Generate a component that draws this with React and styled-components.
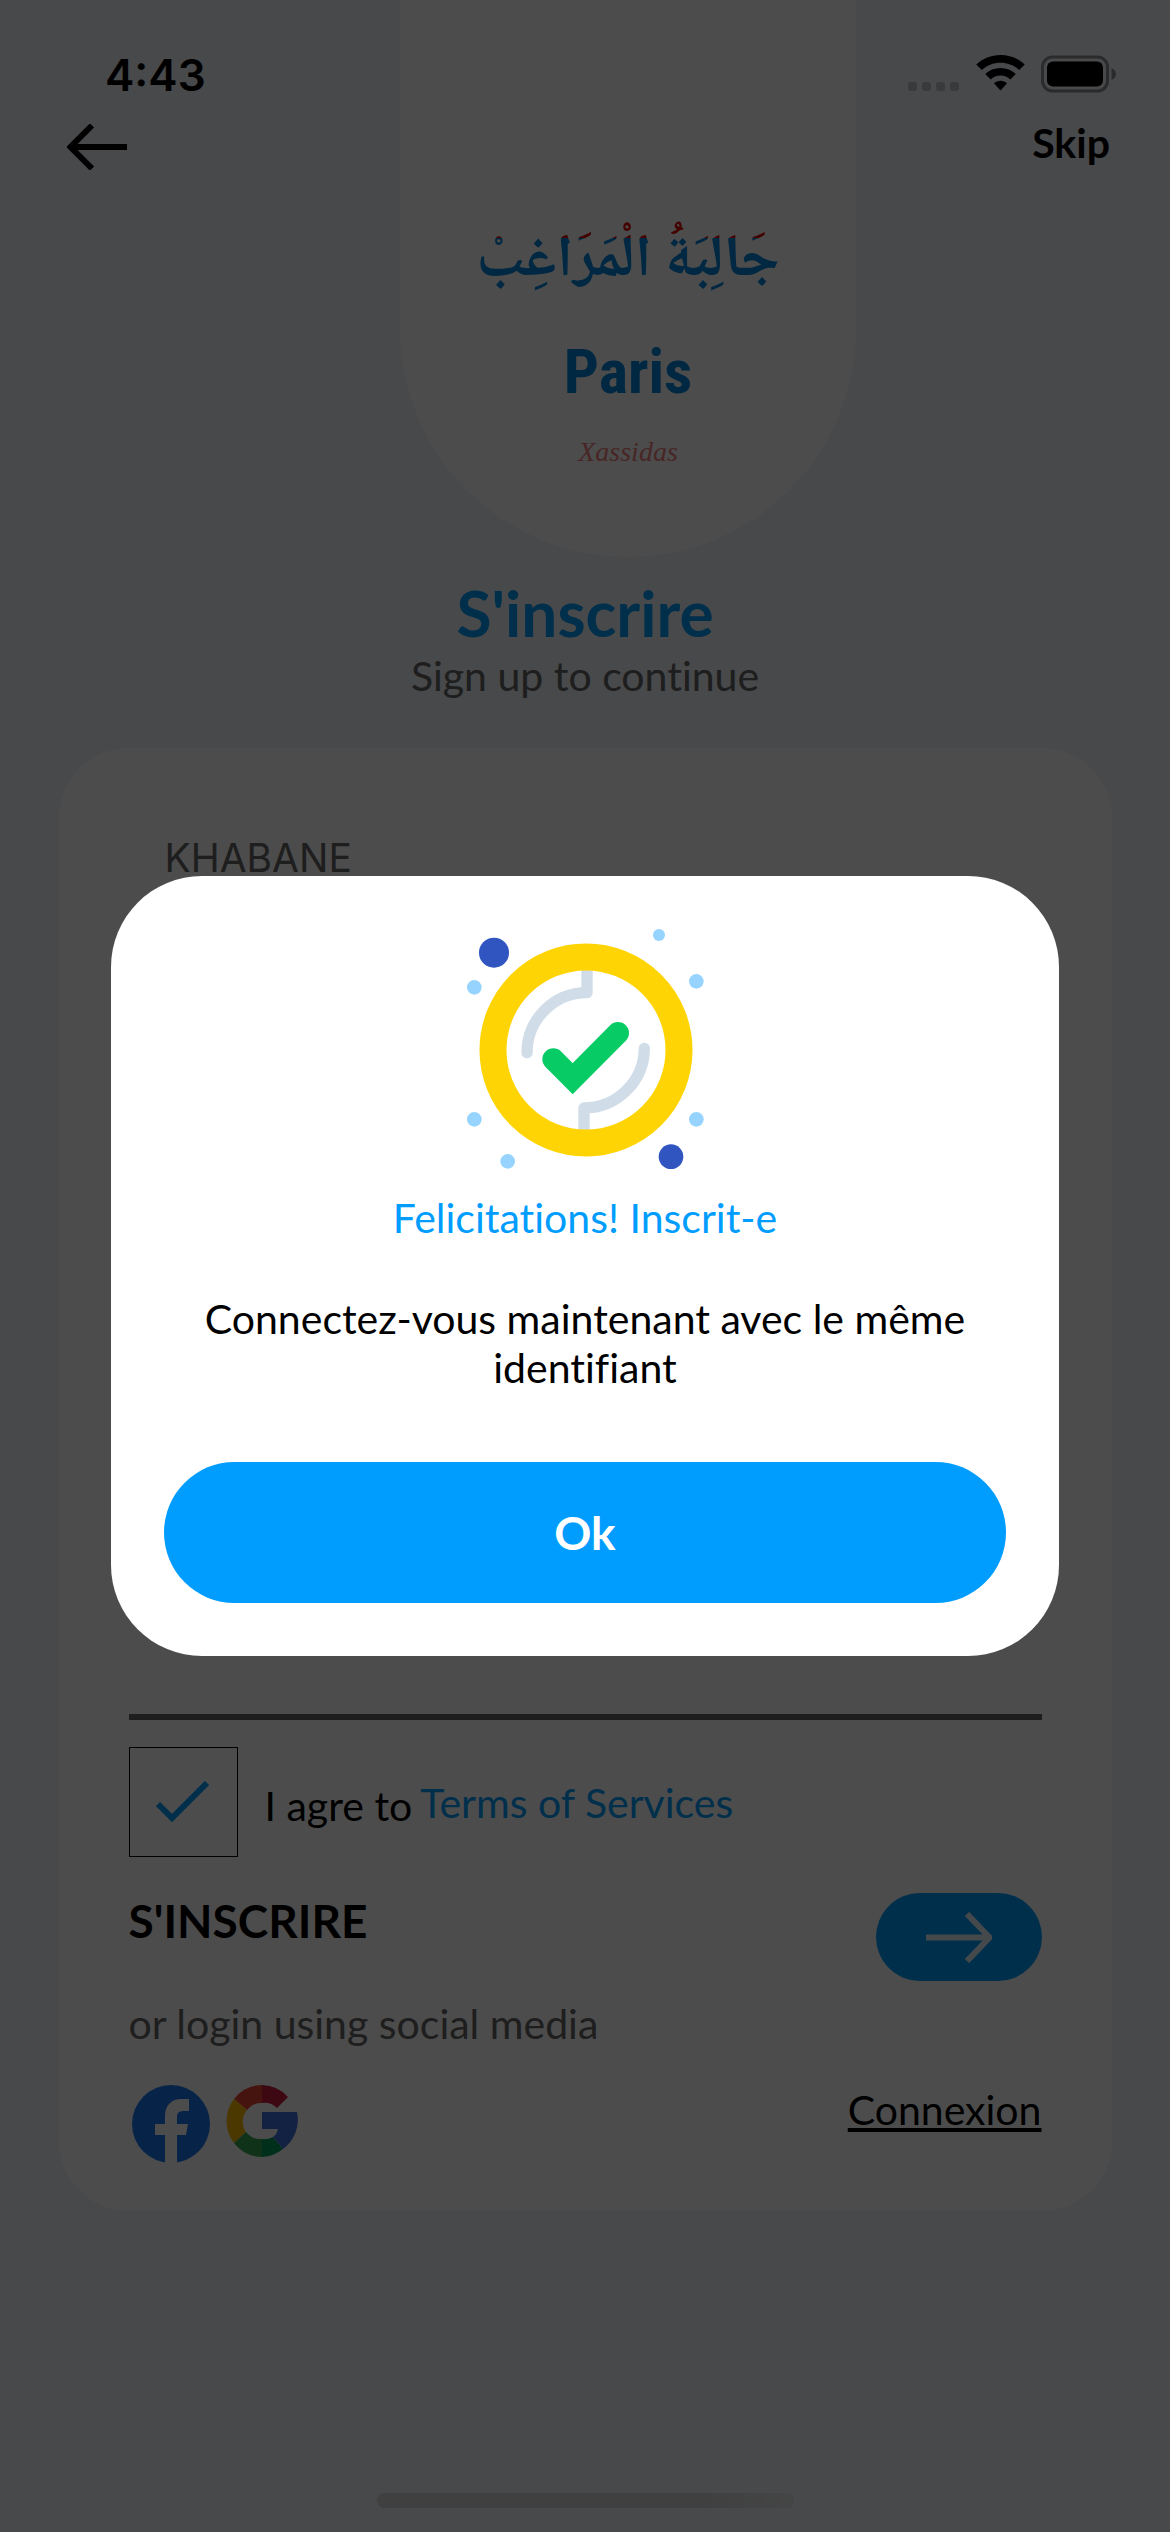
import React, { useState } from "react";
import styled, { createGlobalStyle } from "styled-components";

const GlobalStyle = createGlobalStyle`
  *, *::before, *::after { box-sizing: border-box; }
  body { margin: 0; background: #f0f3f8; }
  button, input { font: inherit; }
`;

const brand = "#009dff";
const muted = "#646464";
const sans = `Lato, "Open Sans", sans-serif`;
const system = `Inter, Roboto, sans-serif`;

const Screen = styled.main`
  min-height: 100vh;
  display: flex;
  flex-direction: column;
  background: #f0f3f8;
  color: #000;
  font-family: ${sans};
  font-size: 41px;
  line-height: 49px;
  font-variant-ligatures: none;
`;

const Header = styled.header`
  display: grid;
  grid-template-columns: 400fr 456fr 314fr;
`;

const HeaderSide = styled.div`
  display: flex;
  flex-direction: column;
  align-items: ${(p) => (p.$end ? "flex-end" : "flex-start")};
  gap: ${(p) => (p.$end ? 16 : 22)}px;
  padding: ${(p) => (p.$end ? "48px 54px 0 0" : "48px 0 0 67px")};
`;

const Time = styled.time`
  padding-left: 38px;
  font: 600 44px/54px ${system};
`;

const StatusIcons = styled.div`
  display: flex;
  align-items: center;
  height: 54px;
  padding-bottom: 2px;
`;

const PlainButton = styled.button`
  display: block;
  border: 0;
  padding: 0;
  background: none;
  color: #000;
  cursor: pointer;
  svg { display: block; }
`;

const SkipButton = styled(PlainButton)`
  padding-right: 6px;
  font-weight: 700;
`;

const Pillar = styled.div`
  display: flex;
  flex-direction: column;
  align-items: center;
  height: 557px;
  padding-top: 200px;
  border-radius: 0 0 228px 228px;
  background: #fff;
`;

const LogoArabic = styled.span`
  font: 700 60px/126px "Noto Naskh Arabic", "DejaVu Sans", sans-serif;
  background: linear-gradient(#e00000 30%, #0086dc 30%);
  background-clip: text;
  color: transparent;
  white-space: nowrap;
`;

const LogoCity = styled.span`
  font: 700 62px/92px "Roboto Condensed", "Liberation Sans", sans-serif;
  color: #0086dc;
`;

const LogoWord = styled.span`
  font: italic 400 28px/68px "Liberation Serif", serif;
  color: #f08080;
`;

const Intro = styled.div`
  margin: 18px 0 48px;
  text-align: center;
`;

const Title = styled.h1`
  margin: 0;
  font-size: 64px;
  line-height: 76px;
  font-weight: 700;
  color: ${brand};
`;

const Subtitle = styled.p`
  margin: 0;
  color: ${muted};
`;

const Card = styled.form`
  width: 90%;
  margin: 0 auto;
  padding: 32px 70px 48px;
  border-radius: 70px;
  background: #fff;
`;

const Fields = styled.div`
  display: flex;
  flex-direction: column;
  gap: 100px;
`;

const Field = styled.input`
  display: block;
  width: 100%;
  height: 160px;
  padding: 0 36px;
  border: 0;
  border-bottom: 6px solid ${muted};
  border-radius: 0;
  background: none;
  color: ${muted};
  font: 400 39px/48px ${system};
  outline: none;
`;

const TermsRow = styled.div`
  display: flex;
  align-items: center;
  margin-top: 27px;
`;

const CheckLabel = styled.label`
  display: flex;
  align-items: center;
  gap: 27px;
  cursor: pointer;
`;

const CheckText = styled.span`
  padding-top: 6px;
`;

const CheckBox = styled.span`
  display: grid;
  width: 109px;
  height: 110px;
  place-items: center;
  > * { grid-area: 1 / 1; }
  svg { pointer-events: none; }
`;

const CheckInput = styled.input`
  appearance: none;
  width: 100%;
  height: 100%;
  margin: 0;
  border: 1px solid #000;
`;

const TermsLink = styled.a`
  padding-left: 8px;
  color: ${brand};
  text-decoration: none;
`;

const SplitRow = styled.div`
  display: flex;
  justify-content: space-between;
  align-items: flex-start;
  margin-top: ${(p) => p.$top}px;
`;

const ActionTitle = styled.h2`
  margin: 0;
  font-size: 46px;
  line-height: 56px;
  font-weight: 700;
`;

const GoButton = styled(PlainButton)`
  display: grid;
  place-items: center;
  width: 166px;
  height: 88px;
  border-radius: 44px;
  background: ${brand};
`;

const SocialNote = styled.p`
  margin: 18px 0 0;
  color: ${muted};
`;

const Socials = styled.div`
  display: flex;
  align-items: flex-start;
  gap: 16px;
  padding-left: 3px;
`;

const LoginLink = styled.a`
  color: #000;
  text-decoration: underline;
  text-decoration-thickness: 4px;
  text-underline-offset: 3px;
`;

const HomeIndicator = styled.div`
  width: 417px;
  height: 15px;
  margin: auto auto 24px;
  border-radius: 8px;
  background: linear-gradient(100deg, #d5d5d5 75%, #e6e8ea 100%);
`;

const Overlay = styled.div`
  position: fixed;
  inset: 0;
  display: flex;
  align-items: center;
  justify-content: center;
  background: rgba(0, 0, 0, 0.7);
`;

const Dialog = styled.section`
  display: flex;
  flex-direction: column;
  align-items: center;
  width: 81%;
  padding: 53px;
  border-radius: 91px;
  background: #fff;
  color: #000;
  text-align: center;
  font-family: ${sans};
  font-size: 41px;
  line-height: 49px;
  font-variant-ligatures: none;
`;

const DialogTitle = styled.h2`
  margin: 24px 0 52px;
  font-size: 41px;
  font-weight: 400;
  color: ${brand};
`;

const DialogText = styled.p`
  margin: 0 0 70px;
`;

const OkButton = styled.button`
  width: 100%;
  height: 141px;
  border: 0;
  border-radius: 71px;
  background: ${brand};
  color: #fff;
  font-size: 46px;
  font-weight: 700;
  cursor: pointer;
`;

const StatusGlyphs = () => (
  <svg width="208" height="38" viewBox="0 0 208 38" role="img" aria-label="Wi-Fi, battery full">
    {[0, 14, 28, 42].map((x) => (
      <rect key={x} x={x} y="27" width="9" height="9" rx="3" fill="#000" fillOpacity="0.2" />
    ))}
    <g transform="translate(68 0)">
      <path d="M24.500 0C15 0 6.500 3.600 0.300 9.500L5.800 15C10.700 10.400 17.200 7.700 24.500 7.700S38.300 10.400 43.200 15L48.700 9.500C42.500 3.600 34 0 24.500 0Z" />
      <path d="M24.500 13C18.600 13 13.200 15.200 9.200 18.900L14.700 24.400C17.300 22 20.700 20.600 24.500 20.600S31.700 22 34.300 24.400L39.800 18.900C35.800 15.200 30.400 13 24.500 13Z" />
      <path d="M24.500 25.700C22 25.700 19.700 26.700 18 28.200L24.500 35.500L31 28.200C29.300 26.700 27 25.700 24.500 25.700Z" />
    </g>
    <rect x="134.500" y="2" width="65" height="34" rx="10" fill="none" stroke="#000" strokeOpacity="0.4" strokeWidth="3" />
    <rect x="139" y="6.500" width="56" height="25" rx="6" />
    <path d="M203.500 13c2.500 1 4.500 3 4.500 6s-2 5-4.500 6Z" fillOpacity="0.4" />
  </svg>
);

const BackArrow = () => (
  <svg width="60" height="46" viewBox="0 0 60 46" fill="none" stroke="#000" strokeWidth="6">
    <path d="M60 23H4M25 1.500L3.500 23L25 44.500" />
  </svg>
);

const NextArrow = () => (
  <svg width="66" height="51" viewBox="0 0 66 51" fill="none" stroke="#fff" strokeOpacity="0.9" strokeWidth="6">
    <path d="M0 25.500H63M41 2L63.500 25.500L41 49" />
  </svg>
);

const Tick = () => (
  <svg width="54" height="42" viewBox="0 0 54 42" fill="none" stroke={brand} strokeWidth="6">
    <path d="M2 23L16 37L51 2" />
  </svg>
);

const FacebookLogo = () => (
  <svg width="78" height="78" viewBox="0 0 78 78">
    <circle cx="39" cy="39" r="39" fill="#1877f2" />
    <path fill="#fff" d="M33 78V50H23V39H33V31C33 20 40 14 49 14H57V26H52C47 26 45 28 45 32V39H56L54 50H45V78Z" />
  </svg>
);

const GoogleLogo = () => (
  <svg width="72" height="72" viewBox="0 0 72 72">
    <path fill="#ea4335" d="M8 14A36 36 0 0 1 36 0V18A18 18 0 0 0 21 25Z" />
    <path fill="#d01c3c" d="M36 0A36 36 0 0 1 62 12L51 23A18 18 0 0 0 36 18Z" />
    <path fill="#fbbc05" d="M8 14A36 36 0 0 0 8 58L20 47A18 18 0 0 1 21 25Z" />
    <path fill="#34a853" d="M8 58A36 36 0 0 0 36 72V54A18 18 0 0 1 20 47Z" />
    <path fill="#00a05a" d="M36 72A36 36 0 0 0 57 64L47 52A18 18 0 0 1 36 54Z" />
    <path fill="#4274e0" d="M36 27H71A36 36 0 0 1 57 64L47 52Q51 49 52 44H36Z" />
  </svg>
);

const SuccessBadge = () => (
  <svg width="237" height="240" viewBox="141 150 711 720" aria-hidden="true">
    <g fill="none" stroke="#d0dde8" strokeWidth="34" strokeLinecap="round" strokeLinejoin="round">
      <path d="M501 260V341A180 180 0 0 0 321 521" />
      <path d="M492 768V687A181 181 0 0 0 673 508" />
    </g>
    <circle cx="498" cy="513" r="279" fill="none" stroke="#ffd404" strokeWidth="81" />
    <path d="M400 541L458 599L594 462" fill="none" stroke="#07cc66" strokeWidth="66" strokeLinecap="round" />
    <g fill="#3055c0">
      <circle cx="222" cy="221" r="45" />
      <circle cx="753" cy="833" r="37" />
    </g>
    <g fill="#96d4ff">
      <circle cx="717" cy="168" r="18" />
      <circle cx="163" cy="325" r="22" />
      <circle cx="829" cy="307" r="22" />
      <circle cx="163" cy="721" r="22" />
      <circle cx="829" cy="721" r="22" />
      <circle cx="263" cy="847" r="22" />
    </g>
  </svg>
);

export default function App() {
  const [open, setOpen] = useState(true);
  const [agreed, setAgreed] = useState(true);

  return (
    <>
      <GlobalStyle />
      <Screen>
        <Header>
          <HeaderSide>
            <Time>4:43</Time>
            <PlainButton type="button" aria-label="Back"><BackArrow /></PlainButton>
          </HeaderSide>
          <Pillar>
            <LogoArabic lang="ar" dir="rtl">جَالِبَةُ الْمَرَاغِبْ</LogoArabic>
            <LogoCity>Paris</LogoCity>
            <LogoWord>Xassidas</LogoWord>
          </Pillar>
          <HeaderSide $end>
            <StatusIcons><StatusGlyphs /></StatusIcons>
            <SkipButton type="button">Skip</SkipButton>
          </HeaderSide>
        </Header>

        <Intro>
          <Title>S'inscrire</Title>
          <Subtitle>Sign up to continue</Subtitle>
        </Intro>

        <Card onSubmit={(e) => e.preventDefault()}>
          <Fields>
            <Field aria-label="Nom" defaultValue="KHABANE" />
            <Field aria-label="Email" type="email" />
            <Field aria-label="Mot de passe" type="password" />
            <Field aria-label="Confirmation" type="password" />
          </Fields>
          <TermsRow>
            <CheckLabel>
              <CheckBox>
                <CheckInput type="checkbox" checked={agreed} onChange={(e) => setAgreed(e.target.checked)} />
                {agreed && <Tick />}
              </CheckBox>
              <CheckText>I agre to</CheckText>
            </CheckLabel>
            <TermsLink href="#terms">Terms of Services</TermsLink>
          </TermsRow>
          <SplitRow $top={36}>
            <ActionTitle>S'INSCRIRE</ActionTitle>
            <GoButton type="submit" aria-label="S'inscrire"><NextArrow /></GoButton>
          </SplitRow>
          <SocialNote>or login using social media</SocialNote>
          <SplitRow $top={37}>
            <Socials>
              <PlainButton type="button" aria-label="Facebook"><FacebookLogo /></PlainButton>
              <PlainButton type="button" aria-label="Google"><GoogleLogo /></PlainButton>
            </Socials>
            <LoginLink href="#connexion">Connexion</LoginLink>
          </SplitRow>
        </Card>
        <HomeIndicator />
      </Screen>

      {open && (
        <Overlay>
          <Dialog role="dialog" aria-modal="true" aria-labelledby="dialog-title">
            <SuccessBadge />
            <DialogTitle id="dialog-title">Felicitations! Inscrit-e</DialogTitle>
            <DialogText>Connectez-vous maintenant avec le même identifiant</DialogText>
            <OkButton type="button" onClick={() => setOpen(false)}>Ok</OkButton>
          </Dialog>
        </Overlay>
      )}
    </>
  );
}
